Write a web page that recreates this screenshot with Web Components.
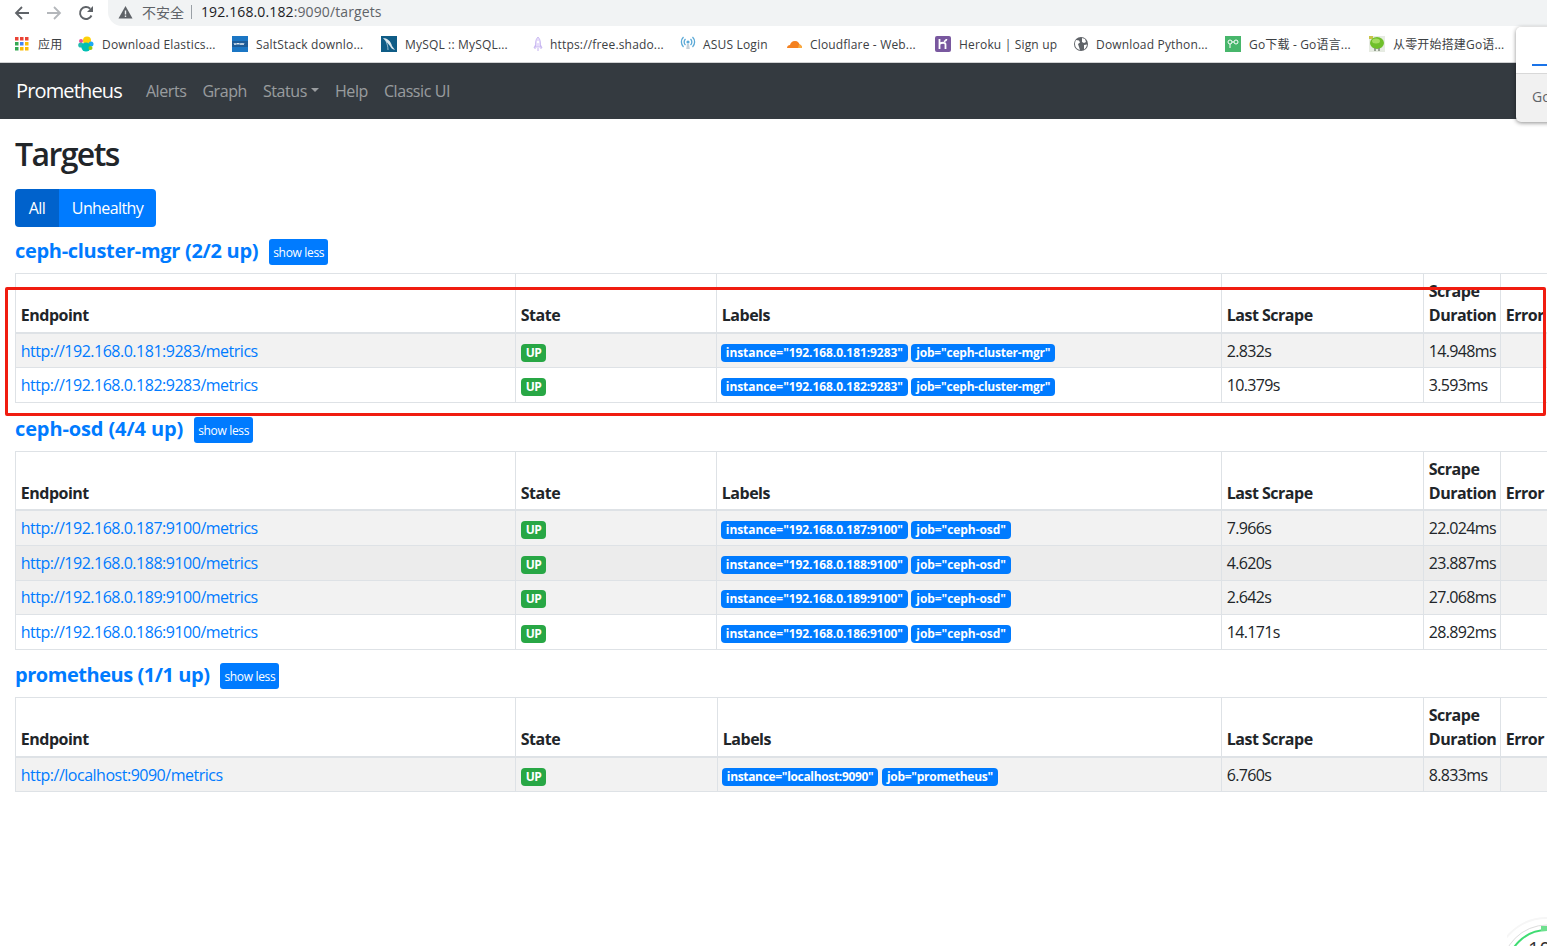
<!DOCTYPE html>
<html>
<head>
<meta charset="utf-8">
<title>Prometheus Time Series Collection and Processing Server</title>
<style>
  html, body { margin: 0; height: 946px; overflow: hidden; background: #fff; }
  body {
    position: relative;
    font-family: "Open Sans", "Noto Sans CJK SC", sans-serif;
    color: #212529;
  }
</style>
</head>
<body>

<browser-chrome url-host="192.168.0.182" url-rest=":9090/targets">
  <book-mark w="24" icon="apps" ml="15" gap="7">应用</book-mark>
  <book-mark w="113" icon="elastic" ml="16">Download Elastics...</book-mark>
  <book-mark w="108" icon="vmw" ml="17">SaltStack downlo...</book-mark>
  <book-mark w="105" icon="mysql" ml="17">MySQL :: MySQL...</book-mark>
  <book-mark w="113" icon="rocket" ml="20" gap="4">https://free.shado...</book-mark>
  <book-mark w="67" icon="asus" ml="17" gap="7">ASUS Login</book-mark>
  <book-mark w="108" icon="cloudflare" ml="16">Cloudflare - Web...</book-mark>
  <book-mark w="97" icon="heroku" ml="17">Heroku | Sign up</book-mark>
  <book-mark w="113" icon="globe" ml="17" gap="7">Download Python...</book-mark>
  <book-mark w="103" icon="go" ml="16">Go下载 - Go语言...</book-mark>
  <book-mark w="110" icon="leaf" ml="17">从零开始搭建Go语...</book-mark>
</browser-chrome>

<prom-navbar brand="Prometheus">
  <nav-link>Alerts</nav-link>
  <nav-link>Graph</nav-link>
  <nav-link caret>Status</nav-link>
  <nav-link>Help</nav-link>
  <nav-link>Classic UI</nav-link>
</prom-navbar>

<targets-page title-text="Targets">
  <target-group name="ceph-cluster-mgr (2/2 up)" cols="500,201,505,202,77,200" mb="13.700" pad="5.100" hl="-.3" il="-.07" jl="-.22">
    <target-row endpoint="http://192.168.0.181:9283/metrics" instance="192.168.0.181:9283" job="ceph-cluster-mgr" last="2.832s" dur="14.948ms"></target-row>
    <target-row endpoint="http://192.168.0.182:9283/metrics" instance="192.168.0.182:9283" job="ceph-cluster-mgr" last="10.379s" dur="3.593ms"></target-row>
  </target-group>
  <target-group name="ceph-osd (4/4 up)" cols="500,201,505,202,77,200" mb="13" pad="4.800" hl="-.12" il="-.07" jl="-.07">
    <target-row endpoint="http://192.168.0.187:9100/metrics" instance="192.168.0.187:9100" job="ceph-osd" last="7.966s" dur="22.024ms"></target-row>
    <target-row endpoint="http://192.168.0.188:9100/metrics" instance="192.168.0.188:9100" job="ceph-osd" last="4.620s" dur="23.887ms" hovered></target-row>
    <target-row endpoint="http://192.168.0.189:9100/metrics" instance="192.168.0.189:9100" job="ceph-osd" last="2.642s" dur="27.068ms"></target-row>
    <target-row endpoint="http://192.168.0.186:9100/metrics" instance="192.168.0.186:9100" job="ceph-osd" last="14.171s" dur="28.892ms"></target-row>
  </target-group>
  <target-group name="prometheus (1/1 up)" cols="500,202,504,202,77,200" mb="14" pad="5.300" hl="-.46" il="-.33" jl="-.27">
    <target-row endpoint="http://localhost:9090/metrics" instance="localhost:9090" job="prometheus" last="6.760s" dur="8.833ms"></target-row>
  </target-group>
</targets-page>

<red-box></red-box>
<side-popup></side-popup>
<score-ring></score-ring>

<script>
// little favicons for the bookmark bar, all 16x16
const ICONS = {
  apps: `<rect x="0" y="1" width="3.500" height="3.500" fill="#ea4335"/><rect x="5" y="1" width="3.500" height="3.500" fill="#ea4335"/><rect x="10" y="1" width="3.500" height="3.500" fill="#ea4335"/>
    <rect x="0" y="6" width="3.500" height="3.500" fill="#34a853"/><rect x="5" y="6" width="3.500" height="3.500" fill="#4285f4"/><rect x="10" y="6" width="3.500" height="3.500" fill="#fbbc05"/>
    <rect x="0" y="11" width="3.500" height="3.500" fill="#34a853"/><rect x="5" y="11" width="3.500" height="3.500" fill="#fbbc05"/><rect x="10" y="11" width="3.500" height="3.500" fill="#fbbc05"/>`,
  elastic: `<circle cx="9" cy="4.500" r="4" fill="#fed10a"/><circle cx="3" cy="5" r="2" fill="#ef5098"/><circle cx="13" cy="8" r="2.500" fill="#1ba9f5"/><circle cx="2.800" cy="9" r="2.600" fill="#24bbb1"/><circle cx="8" cy="11" r="4.600" fill="#00bfb3"/><circle cx="12.500" cy="12" r="2" fill="#93c90e"/>`,
  vmw: `<rect width="16" height="16" fill="#1b76c4"/><rect y="5" width="16" height="6" fill="#1d5c99"/><path d="M2 7l1 2 1-2M5 9V7l1 1 1-1v2M8 7l1 2 1-2 1 2 1-2" fill="none" stroke="#fff" stroke-width=".8"/>`,
  mysql: `<rect width="16" height="16" fill="#0f5c86"/><path d="M2 2c4 0 8 3 9 8l3 4c-3-1-4-2-5-4C7 7 4 5 2 2z" fill="#fff" opacity=".85"/><path d="M5 5c1 3 2 5 2 9" stroke="#cfe3ee" stroke-width=".7" fill="none"/>`,
  rocket: `<path d="M8 1c2 2 2.500 4 2.500 7v3h-5V8C5.500 5 6 3 8 1z" fill="#e6dcfa" stroke="#c4b2f0" stroke-width=".8"/><circle cx="8" cy="6" r="1.200" fill="#fff"/><path d="M5.500 9L4 12h2M10.500 9L12 12h-2M8 12v3" stroke="#c4b2f0" fill="none"/>`,
  asus: `<circle cx="8" cy="6" r="1.600" fill="#59a8d6"/><path d="M5.500 9a4 4 0 0 1 0-6M10.500 3a4 4 0 0 1 0 6M3.500 11a7 7 0 0 1 0-10M12.500 1a7 7 0 0 1 0 10" fill="none" stroke="#59a8d6" stroke-width="1.300"/><path d="M7 8h2l.8 5H6.200z" fill="#c3d0da"/>`,
  cloudflare: `<path d="M1 12c0-2 1.500-3 3-3 .5-2 2-4 5-4s4 2 4.500 3.500c1.500 0 2.500 1.500 2.500 3.500z" fill="#f48120"/><path d="M13 8.500c1.500 0 2.800 1.300 3 3.500h-4z" fill="#faad3f"/>`,
  heroku: `<rect width="16" height="16" rx="2" fill="#79589f"/><path d="M4.500 3v10M4.500 8c2-1.500 6-2 6 .5V13M11.500 3c0 1-1 2-2.500 2.500" fill="none" stroke="#fff" stroke-width="1.800"/>`,
  globe: `<circle cx="8" cy="8" r="7" fill="#5f6368"/><path d="M3 4l3 .5 1 2-2 1.500 1 3 1 3c-3-.5-5-3-5-6 0-1.500.5-3 1-4zM9 2l3 1 1 3-2 1-2-1zM11 9l3-.5c-.3 2-1.500 4-3 5z" fill="#fff"/>`,
  go: `<rect width="16" height="16" fill="#47b66b"/><circle cx="5" cy="6" r="2" fill="none" stroke="#fff"/><circle cx="11" cy="6" r="2" fill="none" stroke="#fff"/><path d="M7 6h2M5 8v4" stroke="#fff" fill="none"/>`,
  leaf: `<rect width="16" height="16" fill="#e6ebe2"/><path d="M0 0h4v3H0z" fill="#c9c44a"/><ellipse cx="8" cy="7" rx="7" ry="6" fill="#6fbf2a"/><ellipse cx="7" cy="5" rx="4" ry="2.500" fill="#a4dc60"/><path d="M6 12v3M10 12v3" stroke="#7d8a78" stroke-width="1.500"/>`
};

class BookMark extends HTMLElement {
  connectedCallback() {
    const icon = this.getAttribute("icon");
    const w = this.getAttribute("w");
    const ml = this.getAttribute("ml") || 16;
    const gap = this.getAttribute("gap") || 8;
    this.attachShadow({ mode: "open" }).innerHTML = `
    <style>
      :host { display: flex; align-items: center; gap: ${gap}px; margin-left: ${ml}px; flex: none; }
      svg { width: 16px; height: 16px; display: block; }
      span { display: block; width: ${w}px; font-size: 12px; line-height: 16px; padding-top: 1px; color: #3c4043; white-space: nowrap; letter-spacing: .17px; }
    </style>
    <svg viewBox="0 0 16 16">${ICONS[icon]}</svg><span><slot></slot></span>`;
  }
}
customElements.define("book-mark", BookMark);

class BrowserChrome extends HTMLElement {
  connectedCallback() {
    this.attachShadow({ mode: "open" }).innerHTML = `
    <style>
      :host { display: block; height: 63px; box-sizing: border-box; border-bottom: 1px solid #d0d1d3; background: #fff; }
      .top { display: flex; height: 26px; }
      .nav { flex: none; width: 108px; display: flex; align-items: center; }
      .nav svg { display: block; width: 16px; height: 16px; flex: none; }
      .bar {
        flex: 1; display: flex; align-items: center; background: #f1f3f4; padding-bottom: 3px; box-sizing: border-box;
        border-radius: 0 0 0 14px; font-size: 14px; color: #5f6368; white-space: nowrap; letter-spacing: .12px;
      }
      .bar svg { width: 15px; height: 14px; margin-left: 10px; flex: none; }
      .warn { font-size: 14px; margin-left: 9px; color: #5f6368; letter-spacing: 0; }
      .sep { width: 1px; height: 14px; background: #9aa0a6; margin: 0 9px 0 7px; }
      .host { color: #202124; }
      .marks { display: flex; align-items: center; height: 36px; }
    </style>
    <div class="top">
      <div class="nav">
        <svg style="margin-left:14px" viewBox="0 0 16 16"><path d="M15 8H2.500M8 2L2 8l6 6" fill="none" stroke="#5f6368" stroke-width="1.800"/></svg>
        <svg style="margin-left:16px" viewBox="0 0 16 16"><path d="M1 8h12.500M8 2l6 6-6 6" fill="none" stroke="#b4b7bb" stroke-width="1.800"/></svg>
        <svg style="margin-left:16px" viewBox="0 0 16 16"><path d="M13.500 10.500A6 6 0 1 1 12.200 3.700" fill="none" stroke="#5f6368" stroke-width="1.900"/><path d="M15 1v6H9z" fill="#5f6368"/></svg>
      </div>
      <div class="bar">
        <svg viewBox="0 0 15 14"><path d="M7.500 1L14.500 13.500H.5z" fill="#5f6368"/><path d="M7.500 5.500v4M7.500 10.500v1.500" stroke="#f1f3f4" stroke-width="1.400"/></svg>
        <span class="warn">不安全</span><span class="sep"></span>
        <span><span class="host">${this.getAttribute("url-host")}</span>${this.getAttribute("url-rest")}</span>
      </div>
    </div>
    <div class="marks"><slot></slot></div>`;
  }
}
customElements.define("browser-chrome", BrowserChrome);

class NavLink extends HTMLElement {
  connectedCallback() {
    const caret = this.hasAttribute("caret");
    this.attachShadow({ mode: "open" }).innerHTML = `
    <style>
      :host { display: inline-flex; align-items: center; padding: 0 8px; color: rgba(255,255,255,.5); font-size: 16px; line-height: 24px; white-space: nowrap; letter-spacing: -.42px; }
      i { display: block; margin-left: 4px; margin-top: -3px; border-top: 4.800px solid; border-left: 4.800px solid transparent; border-right: 4.800px solid transparent; }
    </style>
    <slot></slot>${caret ? "<i></i>" : ""}`;
  }
}
customElements.define("nav-link", NavLink);

class PromNavbar extends HTMLElement {
  connectedCallback() {
    this.attachShadow({ mode: "open" }).innerHTML = `
    <style>
      :host { display: flex; align-items: center; height: 56px; padding: 0 16px; background: #343a40; box-sizing: border-box; }
      .brand { color: #fff; font-size: 20px; line-height: 30px; margin-right: 16px; letter-spacing: -.85px; }
      nav { display: flex; align-items: center; }
    </style>
    <div class="brand">${this.getAttribute("brand")}</div>
    <nav><slot></slot></nav>`;
  }
}
customElements.define("prom-navbar", PromNavbar);

class TargetsPage extends HTMLElement {
  connectedCallback() {
    this.attachShadow({ mode: "open" }).innerHTML = `
    <style>
      :host { display: block; padding: 16px 15px 0; }
      h2 { margin: 0 0 16px; font-size: 32px; line-height: 38px; font-weight: 600; letter-spacing: -1.600px; }
      .group { display: inline-flex; vertical-align: top; margin-bottom: 12px; border-radius: 4px; overflow: hidden; }
      button { border: 0; margin: 0; height: 38px; width: 97px; padding: 0; color: #fff; background: #007bff; font: inherit; font-size: 16px; letter-spacing: -.6px; }
      button.on { background: #0062cc; width: 44px; }
    </style>
    <h2>${this.getAttribute("title-text")}</h2>
    <div class="group"><button class="on">All</button><button>Unhealthy</button></div>
    <slot></slot>`;
  }
}
customElements.define("targets-page", TargetsPage);

// placeholder element, target-group reads its attributes
class TargetRow extends HTMLElement {}
customElements.define("target-row", TargetRow);

class TargetGroup extends HTMLElement {
  connectedCallback() {
    const cols = this.getAttribute("cols").split(",").map(Number);
    const total = cols.reduce((a, b) => a + b, 0);
    const rows = [...this.querySelectorAll("target-row")].map((r, i) => `
      <tr class="${i % 2 == 0 ? "odd" : ""} ${r.hasAttribute("hovered") ? "hover" : ""}">
        <td><a>${r.getAttribute("endpoint")}</a></td>
        <td><span class="badge ok">UP</span></td>
        <td><span class="badge first">instance="${r.getAttribute("instance")}"</span> <span class="badge job">job="${r.getAttribute("job")}"</span></td>
        <td>${r.getAttribute("last")}</td>
        <td>${r.getAttribute("dur")}</td>
        <td></td>
      </tr>`).join("");
    this.attachShadow({ mode: "open" }).innerHTML = `
    <style>
      :host { display: block; margin-bottom: ${this.getAttribute("mb")}px; font-size: 16px; }
      header { display: flex; align-items: center; height: 26px; margin-bottom: 8px; }
      h3 { margin: -2px 0 0; font-size: 20px; line-height: 26px; font-weight: 700; color: #007bff; letter-spacing: ${this.getAttribute("hl")}px; white-space: nowrap; }
      .less { margin-left: 11px; height: 26px; box-sizing: border-box; padding: 3px 4px 0; border-radius: 3px; background: #007bff; color: #fff; font-size: 12px; line-height: 22px; letter-spacing: -.33px; white-space: nowrap; }
      table { border-collapse: collapse; table-layout: fixed; width: ${total}px; }
      th, td { border: 1px solid #dee2e6; padding: 4.800px; line-height: 24px; text-align: left; white-space: nowrap; overflow: visible; letter-spacing: -.65px; }
      th { vertical-align: bottom; border-bottom-width: 2px; padding-bottom: ${this.getAttribute("pad")}px; font-weight: 700; letter-spacing: -.5px; }
      td { vertical-align: top; }
      tr.odd td { background: rgba(0,0,0,.05); }
      tr.hover td { background: rgba(0,0,0,.075); }
      a { color: #007bff; letter-spacing: -.49px; }
      .badge { display: inline-block; vertical-align: baseline; padding: 2px 5px 2px; border-radius: 4px; background: #007bff; color: #fff; font-size: 12px; line-height: 14px; font-weight: 700; letter-spacing: ${this.getAttribute("il")}px; }
      .first { margin-left: -1px; }
      .job { letter-spacing: ${this.getAttribute("jl")}px; }
      .ok { background: #28a745; letter-spacing: -.5px; }
    </style>
    <header><h3>${this.getAttribute("name")}</h3><span class="less">show less</span></header>
    <table>
      <colgroup>${cols.map(w => `<col style="width:${w}px">`).join("")}</colgroup>
      <thead><tr><th>Endpoint</th><th>State</th><th>Labels</th><th>Last Scrape</th><th>Scrape<br>Duration</th><th>Error</th></tr></thead>
      <tbody>${rows}</tbody>
    </table>`;
  }
}
customElements.define("target-group", TargetGroup);

// the red marker somebody drew over the screenshot
class RedBox extends HTMLElement {
  connectedCallback() {
    this.attachShadow({ mode: "open" }).innerHTML = `
    <style>
      :host { position: absolute; left: 5px; top: 287px; width: 1541px; height: 129px; box-sizing: border-box; border: 3px solid #f01c10; border-radius: 2px; pointer-events: none; }
    </style>`;
  }
}
customElements.define("red-box", RedBox);

class SidePopup extends HTMLElement {
  connectedCallback() {
    this.attachShadow({ mode: "open" }).innerHTML = `
    <style>
      :host { position: absolute; left: 1516px; top: 27px; width: 60px; height: 95px; border-radius: 5px; background: #f1f1f1; box-shadow: 0 1px 4px rgba(0,0,0,.45); overflow: hidden; font-size: 14px; color: #5f6368; }
      .top { height: 47px; background: #fff; border-bottom: 1px solid #d8d8d8; box-sizing: border-box; position: relative; }
      .top i { position: absolute; left: 16px; right: 0; top: 37px; height: 2px; background: #1a73e8; }
      .go { padding: 13px 0 0 16px; }
    </style>
    <div class="top"><i></i></div><div class="go">Go</div>`;
  }
}
customElements.define("side-popup", SidePopup);

class ScoreRing extends HTMLElement {
  connectedCallback() {
    this.attachShadow({ mode: "open" }).innerHTML = `
    <style>
      :host { position: absolute; right: 0; bottom: 0; width: 40px; height: 30px; overflow: hidden; }
      svg { display: block; }
    </style>
    <svg width="40" height="30" viewBox="0 0 40 30">
      <circle cx="40" cy="54" r="52" fill="#fff" stroke="#f6f6f6" stroke-width="2"/>
      <circle cx="40" cy="54" r="45" fill="#fff" stroke="#dcdcdc" stroke-width="1"/>
      <circle cx="40" cy="54" r="40" fill="#fff" stroke="#3fdc72" stroke-width="2"/>
      <rect x="34" y="10" width="6" height="5" fill="#6fe08f"/>
      <text x="21" y="40" font-family="Open Sans" font-size="20" fill="#333">100</text>
    </svg>`;
  }
}
customElements.define("score-ring", ScoreRing);
</script>
</body>
</html>
